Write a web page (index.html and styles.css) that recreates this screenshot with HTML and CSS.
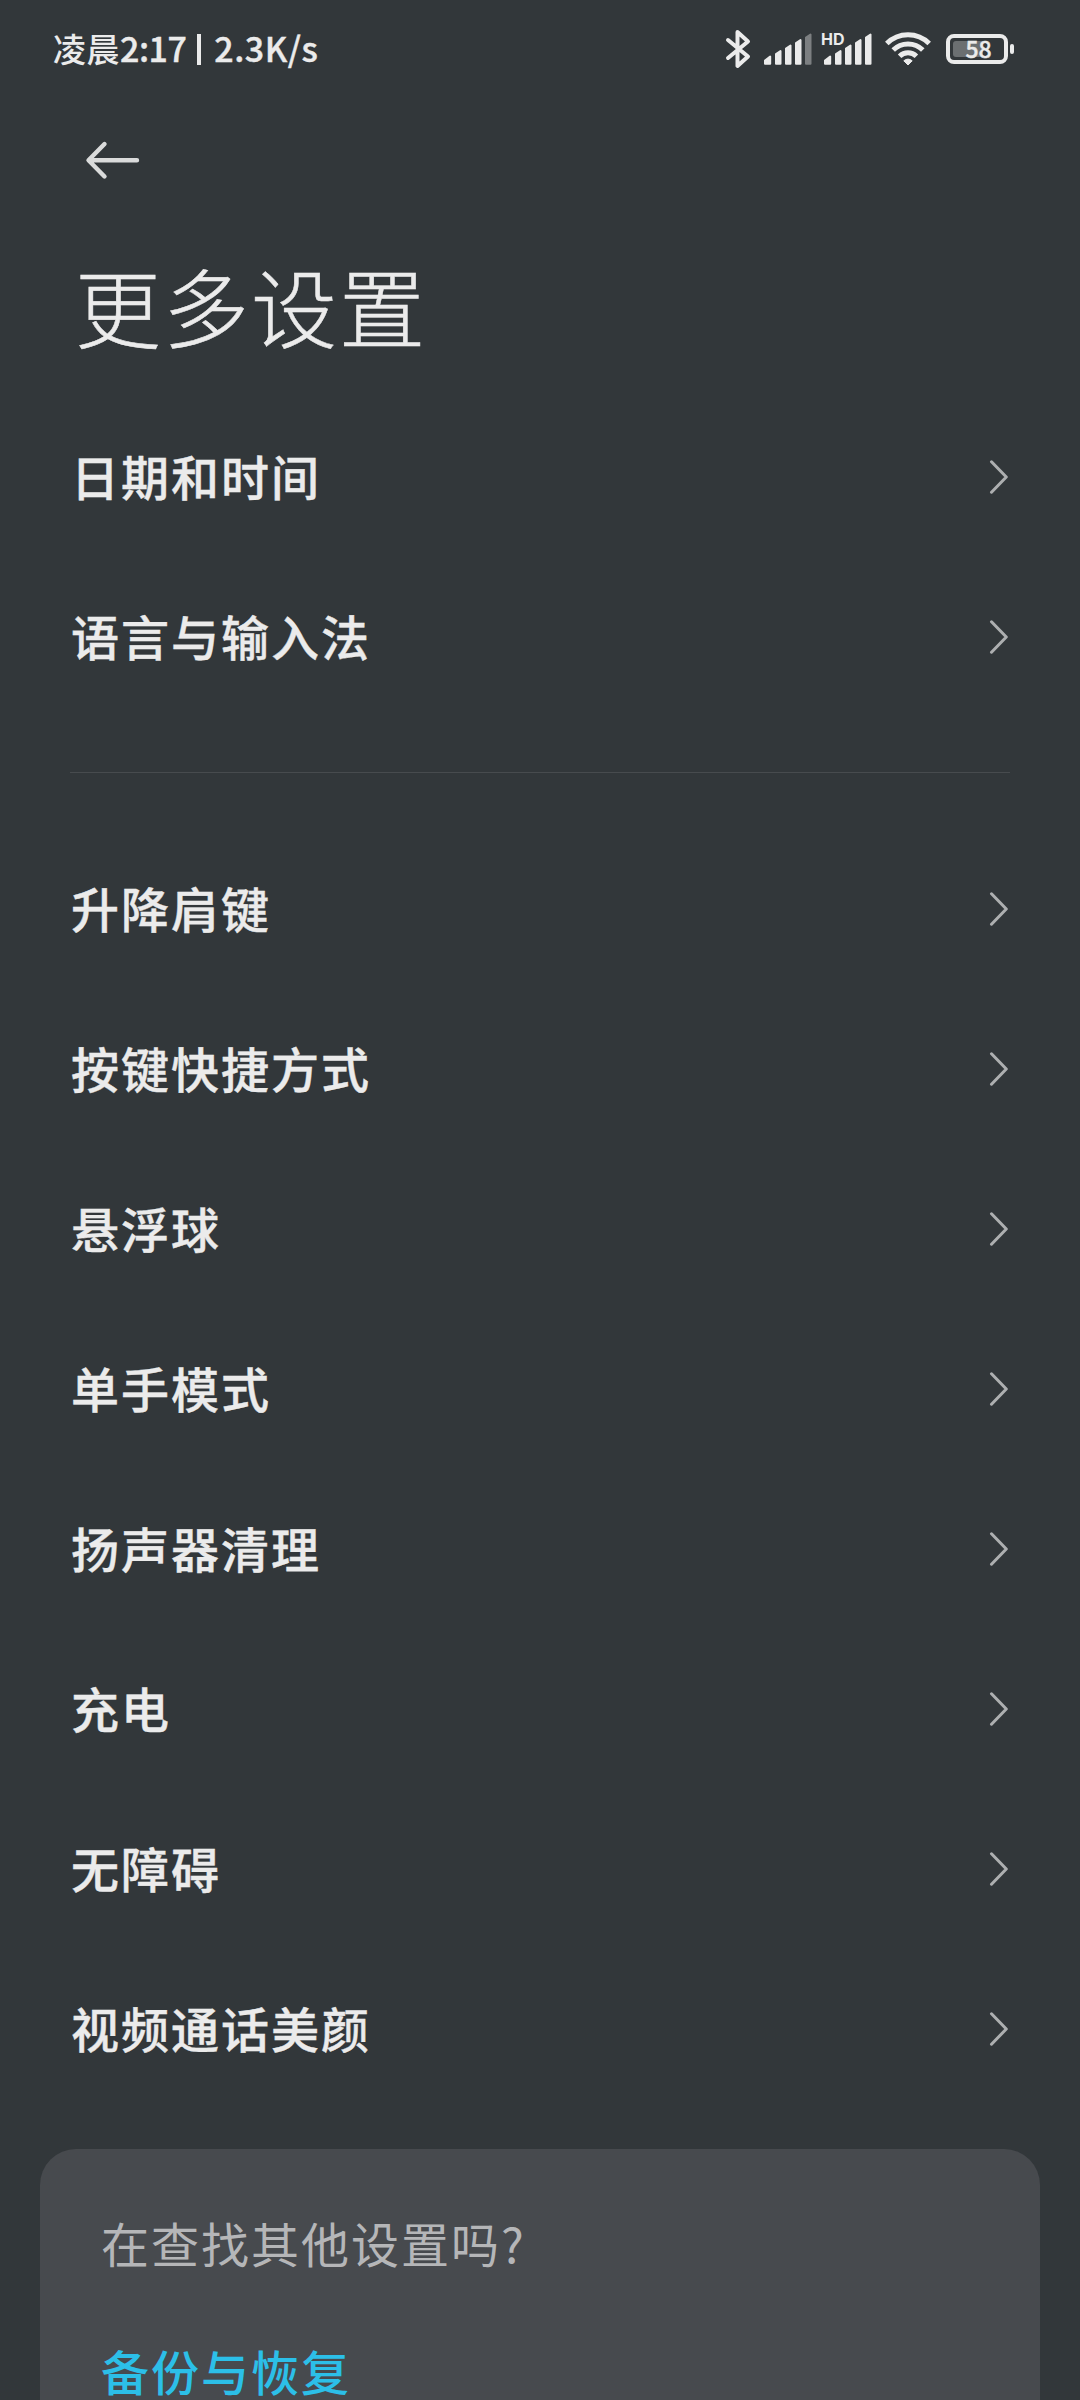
FILE: index.html
```
<!DOCTYPE html>
<html lang="zh-CN">
<head>
    <meta charset="UTF-8">
    <meta name="viewport" content="width=device-width, initial-scale=1.0">
    <title>更多设置</title>
    <link rel="stylesheet" href="styles.css">
</head>
<body>
    <svg class="symbols" width="0" height="0">
        <symbol id="chevron" viewBox="0 0 20 34">
            <path d="M2.5 1.8 L17.3 17 L2.5 32.2" fill="none" stroke="currentColor" stroke-width="3" stroke-linecap="round" stroke-linejoin="round"/>
        </symbol>
    </svg>

    <header class="status-bar">
        <div class="status-left"><span class="period">凌晨</span><span class="clock">2:17</span><span class="divider"></span><span class="speed">2.3K/s</span></div>
        <div class="status-icons">
            <svg class="icon-bluetooth" width="26" height="40" viewBox="0 0 26 40">
                <path d="M3 11 L23 27.5 L12.5 37 V3 L23 12.5 L3 29" fill="none" stroke="currentColor" stroke-width="4" stroke-linecap="round" stroke-linejoin="round"/>
            </svg>
            <svg class="icon-signal" width="48" height="32" viewBox="0 0 48 32">
                <g fill="currentColor" stroke="currentColor" stroke-width="2" stroke-linejoin="round">
                    <path d="M1 30.7 V27.5 L6.2 23.5 V30.7 Z"/>
                    <path d="M12 30.7 V21 L16.5 18 V30.7 Z"/>
                    <path d="M22 30.7 V15.5 L26.5 12.5 V30.7 Z"/>
                    <path d="M32 30.7 V10 L36.5 7 V30.7 Z"/>
                    <path class="dim" d="M42 30.7 V4.5 L46.5 1.5 V30.7 Z"/>
                </g>
            </svg>
            <div class="signal-hd">
                <span class="hd">HD</span>
                <svg width="50" height="32" viewBox="0 0 50 32">
                    <g fill="currentColor" stroke="currentColor" stroke-width="2" stroke-linejoin="round">
                        <path d="M3 30.7 V27.5 L8.2 23.5 V30.7 Z"/>
                        <path d="M14 30.7 V21 L18.5 18 V30.7 Z"/>
                        <path d="M24 30.7 V15.5 L28.5 12.5 V30.7 Z"/>
                        <path d="M34 30.7 V10 L38.5 7 V30.7 Z"/>
                        <path d="M44 30.7 V4.5 L48.5 1.5 V30.7 Z"/>
                    </g>
                </svg>
            </div>
            <svg class="icon-wifi" width="48" height="36" viewBox="0 0 48 36">
                <g fill="none" stroke="currentColor" stroke-width="5">
                    <path d="M2.8 12.5 A30 30 0 0 1 45.2 12.5"/>
                    <path d="M9.2 19 A21 21 0 0 1 38.8 19"/>
                    <path d="M15.6 25.2 A12 12 0 0 1 32.4 25.2"/>
                </g>
                <path d="M24 34 L19.8 29.8 Q24 26.4 28.2 29.8 Z" fill="currentColor" stroke="currentColor" stroke-width="1" stroke-linejoin="round"/>
            </svg>
            <div class="battery">
                <div class="battery-body">
                    <div class="battery-level"></div>
                    <span class="battery-text">58</span>
                </div>
                <div class="battery-cap"></div>
            </div>
        </div>
    </header>

    <nav class="action-bar">
        <svg width="56" height="40" viewBox="0 0 56 40">
            <path d="M20.5 4 L4.5 20.3 L20.5 36.5 M5 20.3 H53" fill="none" stroke="currentColor" stroke-width="4.4" stroke-linecap="round" stroke-linejoin="round"/>
        </svg>
    </nav>

    <h1 class="title">更多设置</h1>

    <main>
        <ul class="group">
            <li class="row"><span>日期和时间</span><svg class="chevron"><use href="#chevron"/></svg></li>
            <li class="row"><span>语言与输入法</span><svg class="chevron"><use href="#chevron"/></svg></li>
        </ul>
        <hr class="separator">
        <ul class="group">
            <li class="row"><span>升降肩键</span><svg class="chevron"><use href="#chevron"/></svg></li>
            <li class="row"><span>按键快捷方式</span><svg class="chevron"><use href="#chevron"/></svg></li>
            <li class="row"><span>悬浮球</span><svg class="chevron"><use href="#chevron"/></svg></li>
            <li class="row"><span>单手模式</span><svg class="chevron"><use href="#chevron"/></svg></li>
            <li class="row"><span>扬声器清理</span><svg class="chevron"><use href="#chevron"/></svg></li>
            <li class="row"><span>充电</span><svg class="chevron"><use href="#chevron"/></svg></li>
            <li class="row"><span>无障碍</span><svg class="chevron"><use href="#chevron"/></svg></li>
            <li class="row"><span>视频通话美颜</span><svg class="chevron"><use href="#chevron"/></svg></li>
        </ul>
        <section class="card">
            <p class="card-title">在查找其他设置吗?</p>
            <a class="card-link">备份与恢复</a>
        </section>
    </main>
</body>
</html>
```
FILE: styles.css
```
* {
    box-sizing: border-box;
    margin: 0;
    padding: 0;
}
body {
    height: 2400px;
    overflow: hidden;
    display: flex;
    flex-direction: column;
    background: #32373a;
    color: #ebebeb;
    font-family: "Noto Sans CJK SC", sans-serif;
}
.symbols {
    position: absolute;
}
svg {
    display: block;
    flex: none;
}

/* status bar */
.status-bar {
    flex: none;
    height: 98px;
    padding: 0 66px 0 53px;
    display: flex;
    align-items: center;
    justify-content: space-between;
}
.status-left {
    display: flex;
    align-items: center;
    padding-bottom: 2px;
    font-size: 33px;
    font-weight: 500;
    line-height: 40px;
    white-space: nowrap;
}
.period {
    letter-spacing: 0.5px;
}
.clock, .speed {
    font-size: 34px;
    -webkit-text-stroke: 0.4px;
}
.clock {
    letter-spacing: -0.5px;
}
.speed {
    letter-spacing: 0.5px;
}
.divider {
    width: 4px;
    height: 31px;
    margin: 2px 13px 0 11px;
    background: #ebebeb;
}
.status-icons {
    display: flex;
    align-items: center;
}
.icon-signal {
    margin-left: 13px;
}
.dim {
    opacity: 0.4;
}
.signal-hd {
    position: relative;
    margin-left: 10px;
}
.hd {
    position: absolute;
    left: -1px;
    top: -2px;
    font-family: Inter, sans-serif;
    font-size: 16px;
    font-weight: 700;
    line-height: 16px;
}
.icon-wifi {
    margin-left: 12px;
}
.battery {
    margin-left: 14px;
    display: flex;
    align-items: center;
    gap: 2px;
}
.battery-body {
    position: relative;
    width: 62px;
    height: 30px;
    padding: 3px;
    border: 4px solid #ebebeb;
    border-radius: 8px;
}
.battery-level {
    width: 30px;
    height: 16px;
    border-radius: 3px;
    background: #6b6f71;
}
.battery-text {
    position: absolute;
    inset: 0;
    padding-left: 3px;
    font-size: 23px;
    font-weight: 500;
    line-height: 21px;
    text-align: center;
    -webkit-text-stroke: 0.4px;
}
.battery-cap {
    width: 4px;
    height: 10px;
    border-radius: 2px;
    background: #ebebeb;
}

.action-bar {
    flex: none;
    height: 124px;
    padding: 0 84px;
    display: flex;
    align-items: center;
    color: #dadbdb;
}
.title {
    flex: none;
    height: 175px;
    padding: 0 75px;
    font-size: 86px;
    font-weight: 300;
    line-height: 165px;
    letter-spacing: 2px;
    -webkit-text-stroke: 0.5px;
}

/* settings list */
main {
    flex: 1;
    display: flex;
    flex-direction: column;
}
.group {
    list-style: none;
}
.row {
    height: 160px;
    padding: 0 70px 0 71px;
    display: flex;
    align-items: center;
    justify-content: space-between;
    font-size: 48px;
    font-weight: 500;
    letter-spacing: 2px;
    -webkit-text-stroke: 0.4px;
}
.row span {
    padding-bottom: 4px;
}
.chevron {
    width: 20px;
    height: 34px;
    margin-right: 1px;
    color: #adafb0;
}
.separator {
    margin: 55px 70px 56px;
    border: none;
    border-top: 1px solid #474b4e;
}
.card {
    flex: 1;
    margin: 40px 40px 0;
    padding: 57px 61px 0;
    border-radius: 36px 36px 0 0;
    background: #474a4e;
    font-size: 48px;
    letter-spacing: 2px;
    line-height: 72px;
}
.card-title {
    color: #b5b6b8;
    font-weight: 400;
}
.card-link {
    display: block;
    margin-top: 66px;
    color: #2cbfe8;
    font-weight: 500;
    line-height: 52px;
}
```
